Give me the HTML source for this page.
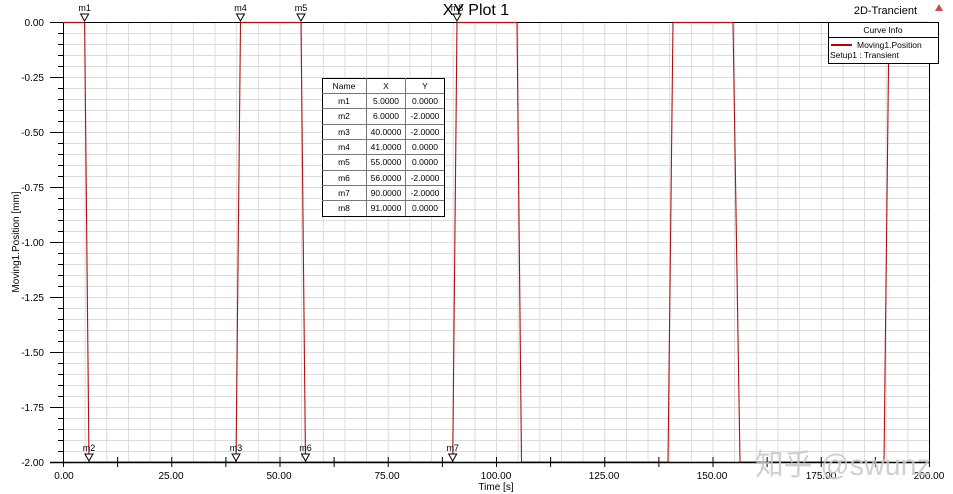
<!DOCTYPE html>
<html><head><meta charset="utf-8"><style>
html,body{margin:0;padding:0;background:#fff;}
svg{display:block;font-family:"Liberation Sans",Arial,sans-serif;}
</style></head><body>
<svg id="s" width="953" height="494" viewBox="0 0 953 494" xmlns="http://www.w3.org/2000/svg">
<defs>
<pattern id="g" patternUnits="userSpaceOnUse" x="63" y="22" width="21.65" height="11">
<path d="M0.5 0V11M0 0.5H21.65" stroke="#dcdcdc" stroke-width="1" fill="none"/>
</pattern>
</defs>
<rect x="63" y="22" width="866" height="440" fill="url(#g)"/>
<polyline fill="none" stroke="#b01010" stroke-width="1.1" points="
63,22.5 84.6,22.5 89,462 236,462 240.5,22.5 301,22.5 305.5,462 452.7,462 457,22.5 517,22.5 521.5,462 668,462 673,22.5 733,22.5 740,462 884,462 889,22.5 929,22.5"/>
<g id="ticks" stroke="#000" stroke-width="1"></g>
<line x1="50" y1="22.5" x2="929" y2="22.5" stroke="#000"/>
<line x1="63.5" y1="22" x2="63.5" y2="462" stroke="#000"/>
<line x1="50" y1="462.5" x2="930" y2="462.5" stroke="#000" stroke-width="1.5"/>
<line x1="929.5" y1="22" x2="929.5" y2="467" stroke="#000"/>
<polyline fill="none" stroke="#b01010" stroke-width="1.2" points="63,22.5 84.6,22.5"/>
<polyline fill="none" stroke="#b01010" stroke-width="1.2" points="240.5,22.5 301,22.5"/>
<polyline fill="none" stroke="#b01010" stroke-width="1.2" points="457,22.5 517,22.5"/>
<polyline fill="none" stroke="#b01010" stroke-width="1.2" points="673,22.5 733,22.5"/>
<polyline fill="none" stroke="#b01010" stroke-width="1.2" points="889,22.5 929,22.5"/>
<g font-size="10" fill="#000" text-anchor="end">
<text x="44" y="26">0.00</text><text x="44" y="81">-0.25</text><text x="44" y="136">-0.50</text><text x="44" y="191">-0.75</text><text x="44" y="246">-1.00</text><text x="44" y="301">-1.25</text><text x="44" y="356">-1.50</text><text x="44" y="411">-1.75</text><text x="44" y="466">-2.00</text>
</g>
<g font-size="10" fill="#000" text-anchor="middle">
<text x="64" y="479">0.00</text><text x="171" y="479">25.00</text><text x="279" y="479">50.00</text><text x="387" y="479">75.00</text><text x="496" y="479">100.00</text><text x="604" y="479">125.00</text><text x="712" y="479">150.00</text><text x="821" y="479">175.00</text><text x="929" y="479">200.00</text>
<text x="496" y="490" font-size="10">Time [s]</text>
</g>
<text x="19" y="242" font-size="10" text-anchor="middle" transform="rotate(-90 19 242)">Moving1.Position [mm]</text>
<text x="476" y="15" font-size="16" text-anchor="middle">XY Plot 1</text>
<g font-size="9" text-anchor="middle" fill="#000">
<text x="84.6" y="11">m1</text><text x="240.5" y="11">m4</text><text x="301" y="11">m5</text><text x="457" y="11">m8</text>
<text x="89" y="451">m2</text><text x="236" y="451">m3</text><text x="305.5" y="451">m6</text><text x="452.7" y="451">m7</text>
</g>
<g fill="#fff" stroke="#000" stroke-width="1">
<path d="M80.6 14L88.6 14L84.6 21Z"/><path d="M236.5 14L244.5 14L240.5 21Z"/><path d="M297 14L305 14L301 21Z"/><path d="M453 14L461 14L457 21Z"/>
<path d="M85 454L93 454L89 461Z"/><path d="M232 454L240 454L236 461Z"/><path d="M301.5 454L309.5 454L305.5 461Z"/><path d="M448.7 454L456.7 454L452.7 461Z"/>
</g>
<g>
<rect x="322.5" y="78.5" width="122" height="138" fill="#fff" stroke="#000"/>
<g stroke="#777" stroke-width="1">
<line x1="366.5" y1="78" x2="366.5" y2="216"/><line x1="405.5" y1="78" x2="405.5" y2="216"/>
<line x1="322" y1="93.5" x2="444" y2="93.5"/><line x1="322" y1="108.5" x2="444" y2="108.5"/><line x1="322" y1="124.5" x2="444" y2="124.5"/><line x1="322" y1="139.5" x2="444" y2="139.5"/><line x1="322" y1="154.5" x2="444" y2="154.5"/><line x1="322" y1="170.5" x2="444" y2="170.5"/><line x1="322" y1="185.5" x2="444" y2="185.5"/><line x1="322" y1="200.5" x2="444" y2="200.5"/>
</g>
<g font-size="8.5" text-anchor="middle" fill="#000">
<text x="344" y="89">Name</text><text x="386" y="89">X</text><text x="425" y="89">Y</text>
<text x="344" y="104">m1</text><text x="386" y="104">5.0000</text><text x="425" y="104">0.0000</text>
<text x="344" y="119">m2</text><text x="386" y="119">6.0000</text><text x="425" y="119">-2.0000</text>
<text x="344" y="135">m3</text><text x="386" y="135">40.0000</text><text x="425" y="135">-2.0000</text>
<text x="344" y="150">m4</text><text x="386" y="150">41.0000</text><text x="425" y="150">0.0000</text>
<text x="344" y="165">m5</text><text x="386" y="165">55.0000</text><text x="425" y="165">0.0000</text>
<text x="344" y="181">m6</text><text x="386" y="181">56.0000</text><text x="425" y="181">-2.0000</text>
<text x="344" y="196">m7</text><text x="386" y="196">90.0000</text><text x="425" y="196">-2.0000</text>
<text x="344" y="211">m8</text><text x="386" y="211">91.0000</text><text x="425" y="211">0.0000</text>
</g>
</g>
<text x="917" y="14" font-size="11" text-anchor="end">2D-Trancient</text>
<path d="M935 11L939 4L943 11Z" fill="#c05050"/>
<rect x="828.5" y="22.5" width="110" height="41" fill="#fff" stroke="#000"/>
<line x1="828" y1="37.5" x2="938" y2="37.5" stroke="#000"/>
<g font-size="8.5" fill="#000">
<text x="883" y="33" text-anchor="middle">Curve Info</text>
<line x1="831" y1="45" x2="852" y2="45" stroke="#c00000" stroke-width="2"/>
<text x="857" y="48">Moving1.Position</text>
<text x="830" y="58">Setup1 : Transient</text>
</g>
<text x="755" y="475" font-size="30" fill="#c8c8c8" textLength="176" lengthAdjust="spacingAndGlyphs" font-family="'Liberation Sans','Noto Sans CJK SC',sans-serif" opacity="0.85">知乎 @swunz</text>
</svg>
<script>
var g=document.getElementById('ticks'),h='';
for(var i=0;i<=40;i++){var y=22.5+i*11;h+='<line x1="'+(i%5==0?50:58)+'" y1="'+y+'" x2="63" y2="'+y+'"/>';}
for(var j=0;j<=16;j++){var x=63.5+j*54.125;h+='<line x1="'+x+'" y1="457" x2="'+x+'" y2="467"/>';}
g.innerHTML=h;
</script>
</body></html>
